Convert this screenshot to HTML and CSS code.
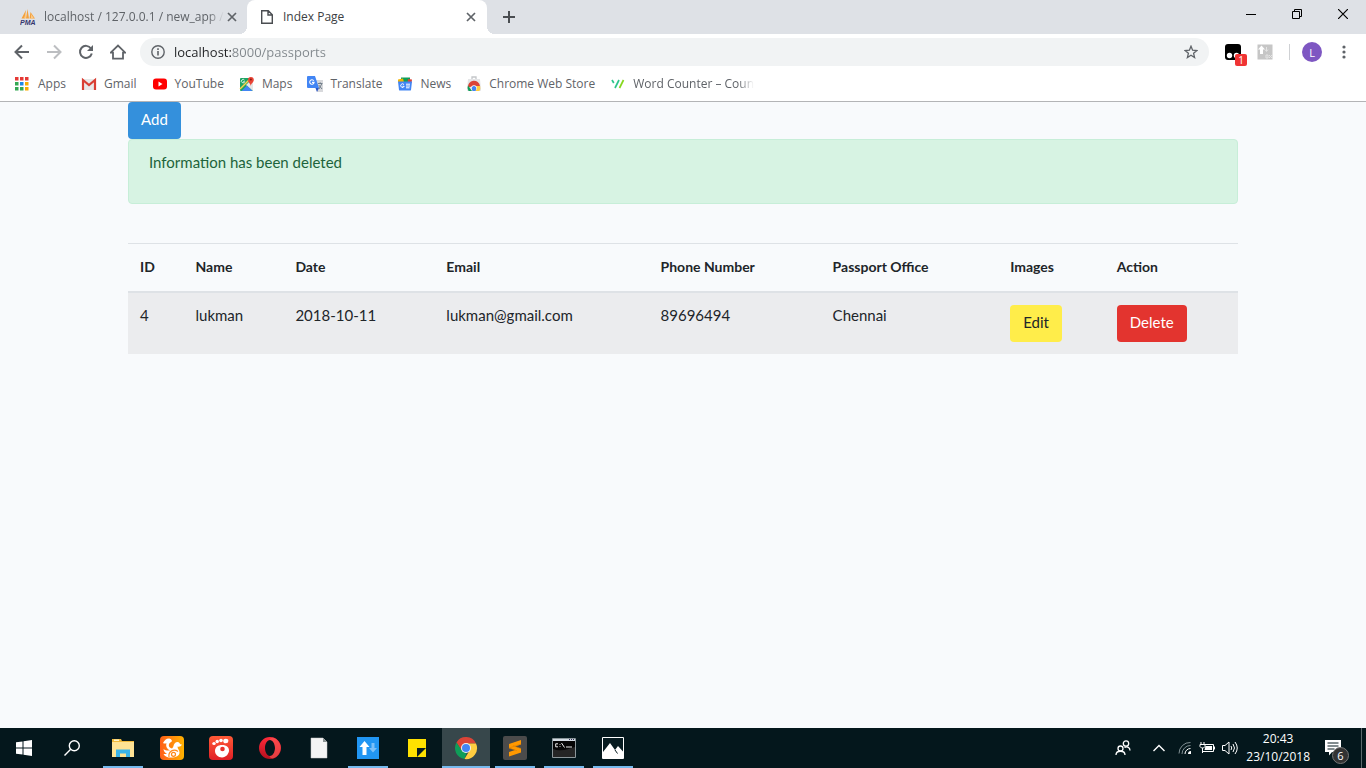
FILE: index.html
```html
<!DOCTYPE html>
<html lang="en">
<head>
<meta charset="utf-8">
<title>Index Page</title>
<link rel="stylesheet" href="styles.css">
</head>
<body>
<header class="browser">
  <div class="tabstrip">
    <div class="tab">
      <svg class="ico" width="16" height="16" viewBox="0 0 16 16"><path d="M6 1 1.500 9.500h3.500zM7.500 0 6 9.500h3zM10.500 3l-1 6.500h5.500z" fill="#f5a13a"/><path d="M6 3v6.500h-2zM11 5l3 4.500h-3z" fill="#f9c98a"/><text x="0" y="16" class="pma">PMA</text></svg>
      <span class="tab-title"><span class="fade">localhost / 127.0.0.1 / new_app /</span></span>
      <button class="tab-close" aria-label="Close tab"><svg width="10" height="10" viewBox="0 0 10 10"><path d="M1 1l8 8M9 1l-8 8" stroke="#5f6368" stroke-width="1.700"/></svg></button>
    </div>
    <div class="tab active">
      <svg class="ico" width="16" height="16" viewBox="0 0 16 16"><path d="M2.700 1.700h6.600l4 4v8.600H2.700zM9 1.700V6h4.300" fill="none" stroke="#4a4d51" stroke-width="1.400"/></svg>
      <span class="tab-title">Index Page</span>
      <button class="tab-close" aria-label="Close tab"><svg width="10" height="10" viewBox="0 0 10 10"><path d="M1 1l8 8M9 1l-8 8" stroke="#5f6368" stroke-width="1.700"/></svg></button>
    </div>
    <button class="new-tab" aria-label="New tab"><svg width="12" height="12" viewBox="0 0 12 12"><path d="M6 0v12M0 6h12" stroke="#4a4d51" stroke-width="2"/></svg></button>
    <div class="window-controls">
      <button aria-label="Minimize"><svg width="10" height="10" viewBox="0 0 10 10"><path d="M0 5.500h10" stroke="#000"/></svg></button>
      <button aria-label="Restore"><svg width="10" height="10" viewBox="0 0 10 10"><path d="M.5 2.500h7v7h-7zM2.500 2.500v-2h7v7h-2" fill="none" stroke="#000"/></svg></button>
      <button aria-label="Close"><svg width="10" height="10" viewBox="0 0 10 10"><path d="M0 0l10 10M10 0L0 10" stroke="#000" stroke-width="1.200"/></svg></button>
    </div>
  </div>

  <div class="toolbar">
    <div class="nav">
      <button aria-label="Back"><svg width="16" height="16" viewBox="0 0 16 16"><path d="M15 8H2M8 1.500L1.500 8 8 14.500" fill="none" stroke="#5f6368" stroke-width="2"/></svg></button>
      <button aria-label="Forward"><svg width="16" height="16" viewBox="0 0 16 16"><path d="M1 8h13M8 1.500L14.500 8 8 14.500" fill="none" stroke="#bcbec1" stroke-width="2"/></svg></button>
      <button aria-label="Reload"><svg width="16" height="16" viewBox="0 0 16 16"><path d="M13 4.500A6 6 0 1 0 13.800 9.500" fill="none" stroke="#5f6368" stroke-width="2"/><path d="M15 1v6H9z" fill="#5f6368"/></svg></button>
      <button aria-label="Home"><svg width="16" height="16" viewBox="0 0 16 16"><path d="M.7 8.700L8 1.500l7.300 7.200H13v6H3v-6z" fill="none" stroke="#5f6368" stroke-width="1.800"/></svg></button>
    </div>
    <div class="omnibox">
      <svg width="14" height="14" viewBox="0 0 14 14"><circle cx="7" cy="7" r="6.200" fill="none" stroke="#5f6368" stroke-width="1.400"/><path d="M7 6v4.500M7 3.300v1.700" stroke="#5f6368" stroke-width="1.600"/></svg>
      <input class="url" type="text" aria-label="Address" value="localhost:8000/passports">
      <button aria-label="Bookmark this page"><svg width="14" height="14" viewBox="0 0 14 14"><path d="M7 1.200l1.600 4 4.300.3-3.300 2.800 1 4.200L7 10.200l-3.600 2.300 1-4.200L1.100 5.500l4.300-.3z" fill="none" stroke="#5f6368" stroke-width="1.300"/></svg></button>
    </div>
    <div class="extensions">
      <button class="ext" aria-label="Tampermonkey, 1 script"><svg width="16" height="16" viewBox="0 0 16 16"><rect width="16" height="16" rx="3"/><circle cx="4.500" cy="11.500" r="2.700" fill="#fff"/><circle cx="11.500" cy="11.500" r="2.700" fill="#fff"/></svg><span class="badge">1</span></button>
      <button class="ext" aria-label="Data usage"><svg width="16" height="16" viewBox="0 0 16 16"><rect x=".5" y=".5" width="15" height="15" fill="#c6c6c6"/><path d="M4.500 1.500L8 5.500H6V10H3V5.500H1z" fill="#fff"/><path d="M9.500 3v4M8 5.500l1.500 2 1.500-2M9 11h2v3H9zM12 11l3 3M15 11l-3 3" fill="none" stroke="#e4e4e4"/></svg></button>
      <span class="divider"></span>
      <button class="avatar" aria-label="Profile">L</button>
      <button class="more" aria-label="Menu"><svg width="4" height="14" viewBox="0 0 4 14"><g fill="#5f6368"><circle cx="2" cy="2" r="1.600"/><circle cx="2" cy="7" r="1.600"/><circle cx="2" cy="12" r="1.600"/></g></svg></button>
    </div>
  </div>

  <nav class="bookmarks">
    <a href="#"><svg width="16" height="14" viewBox="0 0 16 14"><path d="M0 0h3.500v3.500H0zM5 0h3.500v3.500H5zM10 0h3.500v3.500H10z" fill="#e53935"/><path d="M0 5h3.500v3.500H0zM0 10h3.500v3.500H0zM5 10h3.500v3.500H5z" fill="#34a853"/><path d="M5 5h3.500v3.500H5z" fill="#1e88e5"/><path d="M10 5h3.500v3.500H10zM10 10h3.500v3.500H10z" fill="#f9ab00"/></svg>Apps</a>
    <a href="#"><svg width="16" height="16" viewBox="0 0 16 16"><path d="M1 3h14v11H1z" fill="#e8e8e8"/><path d="M2 14V4L8 9l6-5v10" fill="none" stroke="#d93f34" stroke-width="2.200"/></svg>Gmail</a>
    <a href="#"><svg width="16" height="16" viewBox="0 0 16 16"><rect x="1" y="2.500" width="14" height="11" rx="3" fill="#f00"/><path d="M6.500 5.500v5L10.500 8z" fill="#fff"/></svg>YouTube</a>
    <a href="#"><svg width="16" height="16" viewBox="0 0 16 16"><rect x="1" y="2" width="13" height="13" rx="1" fill="#1fa463"/><path d="M7 9l5-5 2 2v9z" fill="#e6e6e6"/><path d="M2.500 15L8 9.500l5.500 5.500z" fill="#4285f4"/><path d="M1 13L11 3" stroke="#ffd04b" stroke-width="1.500"/><path d="M11.800 10C11.500 7.500 9 6.500 9 3.800a2.900 2.900 0 0 1 5.800 0C14.800 6.500 12 7.500 11.800 10z" fill="#ea4335"/><circle cx="11.900" cy="3.600" r="1" fill="#8b1a12"/><path d="M5.500 4.200a1.700 1.700 0 1 0 .2 1.500H4.200" fill="none" stroke="#fff" stroke-width=".8"/></svg>Maps</a>
    <a href="#"><svg width="16" height="16" viewBox="0 0 16 16"><path d="M6 4h10v12H10z" fill="#d8d9dc"/><path d="M0 1a1 1 0 0 1 1-1h7l4 12H1a1 1 0 0 1-1-1z" fill="#4285f4"/><path d="M8.500 12h3.500l-2 4z" fill="#2a56c6"/><path d="M6.800 4.800a2.200 2.200 0 1 0 .3 1.600H5" fill="none" stroke="#fff" stroke-width="1.100"/><path d="M11 7.500h4.500M13.200 6.300v1.200M11.700 9l3.300 4M14.700 8l-2.700 5" fill="none" stroke="#74808c"/></svg>Translate</a>
    <a href="#"><svg width="16" height="16" viewBox="0 0 16 16"><path d="M4 1.500h9v5H4z" fill="#0f9d58"/><path d="M1 3.500l5-1 1 4H1z" fill="#f4b400"/><path d="M11 3l4 .5-.5 3.500h-4z" fill="#db4437"/><path d="M1 5.500h14L14 14a1 1 0 0 1-1 .5H3A1 1 0 0 1 2 14z" fill="#4285f4"/><path d="M7 8.600a1.800 1.800 0 1 0 .2 1.700H5.500M9 8.200h4M9 10h4M9 11.800h3.500" fill="none" stroke="#fff"/></svg>News</a>
    <a href="#"><svg width="16" height="16" viewBox="0 0 16 16"><path d="M6 3V1h4v2" fill="none" stroke="#c3c6c9" stroke-width="1.300"/><path d="M2 3h12l1 11a1 1 0 0 1-1 1H2a1 1 0 0 1-1-1z" fill="#e4e5e7"/><path d="M2 11.500A6 6 0 0 1 14 10H8z" fill="#db4437"/><path d="M2 9.500L6 15H2.500A5.500 5.500 0 0 1 2 9.500z" fill="#0f9d58"/><path d="M9.500 10h4.600a6 6 0 0 1-.8 5H9z" fill="#ffcd40"/><circle cx="8" cy="12" r="2.800" fill="#fff"/><path d="M5.800 13a2.300 2.300 0 1 1 4.400 0l-.7 2h-3z" fill="#4285f4"/></svg>Chrome Web Store</a>
    <a href="#"><svg width="16" height="16" viewBox="0 0 16 16"><path d="M2 4l1.800 3" stroke="#2bc48a" stroke-width="1.700"/><path d="M5 12l4-8" stroke="#2bc48a" stroke-width="1.700"/><path d="M9.500 12l4-8" stroke="#86d71e" stroke-width="1.700"/></svg><span class="fade">Word Counter – Coun</span></a>
  </nav>
</header>

<main class="page">
  <div class="container">
    <a class="btn primary" href="#">Add</a>
    <div class="alert" role="status"><p>Information has been deleted</p></div>
    <table class="table">
      <colgroup><col class="c-id"><col class="c-name"><col class="c-date"><col class="c-email"><col class="c-phone"><col class="c-office"><col class="c-images"><col class="c-action"></colgroup>
      <thead>
        <tr><th>ID</th><th>Name</th><th>Date</th><th>Email</th><th>Phone Number</th><th>Passport Office</th><th>Images</th><th>Action</th></tr>
      </thead>
      <tbody>
        <tr><td>4</td><td>lukman</td><td>2018-10-11</td><td>lukman@gmail.com</td><td>89696494</td><td>Chennai</td><td><a class="btn warning" href="#">Edit</a></td><td><button class="btn danger" type="button">Delete</button></td></tr>
      </tbody>
    </table>
  </div>
</main>

<footer class="taskbar">
  <div class="launch">
    <button aria-label="Start"><svg width="16" height="16" viewBox="0 0 16 16"><path d="M0 2.300L6.500 1.400v6.100H0zM7.500 1.200L16 0v7.500H7.500zM0 8.500h6.500v6.100L0 13.700zM7.500 8.500H16V16l-8.500-1.200z" fill="#fff"/></svg></button>
    <button aria-label="Search"><svg width="16" height="16" viewBox="0 0 16 16"><circle cx="10.300" cy="5.700" r="5" fill="none" stroke="#fff" stroke-width="1.400"/><path d="M6.700 9.300L.5 15.500" stroke="#fff" stroke-width="1.400"/></svg></button>
  </div>
  <div class="apps">
    <button class="open" aria-label="File Explorer"><svg width="24" height="24" viewBox="0 0 24 24"><path d="M1 3h9l1 2h12v16H1z" fill="#f0b93c"/><path d="M1 6h22v15H1z" fill="#ffe394"/><path d="M3 3.500h5v1.500H3z" fill="#fff4c9"/><path d="M5 21v-7.500h14V21h-4v-3.500H9V21z" fill="#3bb3e8"/></svg></button>
    <button aria-label="UC Browser"><svg width="24" height="24" viewBox="0 0 24 24"><defs><linearGradient id="uc" x1="0" x2="1" y2="0"><stop stop-color="#ff5e18"/><stop offset="1" stop-color="#ffb300"/></linearGradient></defs><rect width="24" height="24" rx="4" fill="url(#uc)"/><path d="M9 2.500C6 2.500 4.500 4.500 3 7c1 .7 2.300.7 3.500.3C5.500 10.500 7 13 10 14.500c-3 .3-5-.3-6.500-1.500.3 2.500 1.500 4 3.500 4.700-1.300.5-2.500.5-3.500.2C5 20.500 7.500 21.500 11 21.500c5 0 8.500-1.500 8.500-5 0-2.500-2-3.500-2-6 1.500.5 3.500 0 4.500-2-1.500 0-2-.5-2.500-1.500-1-1.500-3-1.500-4.500 0-2 2-1 4-3 5.500C9 11.500 8.500 10 9 8c.5-1.300 2-1.500 3-3C11.500 3.500 10.500 2.500 9 2.500z" fill="#fff"/><path d="M9 21c-1-6 5-8.500 9-5.500" fill="none" stroke="#ff8a1a" stroke-width="1.200"/><circle cx="13.500" cy="18.300" r="2" fill="none" stroke="#ff8a1a" stroke-width="1.200"/></svg></button>
    <button aria-label="GOM Player"><svg width="24" height="24" viewBox="0 0 24 24"><defs><linearGradient id="gom" x1="0" x2="0" y2="1"><stop stop-color="#ff5a36"/><stop offset="1" stop-color="#e01f26"/></linearGradient></defs><rect width="24" height="24" rx="4" fill="url(#gom)"/><g fill="#fff"><ellipse cx="5" cy="7.500" rx="1.700" ry="1.500"/><circle cx="8.200" cy="5.500" r="1.700"/><circle cx="12" cy="4.500" r="1.800"/><ellipse cx="16.800" cy="5" rx="2.600" ry="2.300"/><path d="M6 15c0-4 3-6 7-6 5 0 7 2.500 7 5.500s-3 7-7 7-7-3-7-6.500z"/></g><circle cx="13.500" cy="13" r="2.300" fill="#e8322c"/></svg></button>
    <button aria-label="Opera"><svg width="24" height="24" viewBox="0 0 24 24"><defs><linearGradient id="op" x1="0" x2="0" y2="1"><stop stop-color="#ff2b3a"/><stop offset="1" stop-color="#b5101e"/></linearGradient></defs><path fill-rule="evenodd" d="M12 1a11 11 0 1 0 0 22 11 11 0 0 0 0-22zM12 4c3 0 5 4 5 8s-2 8-5 8-5-4-5-8 2-8 5-8z" fill="url(#op)"/><path d="M15 1.500a11 11 0 0 1 0 21c-2 0-3-1-3.500-2.500 3 .5 5.500-3.500 5.500-8s-2.500-8.500-5.500-8c.5-1.500 1.500-2.500 3.500-2.500z" fill="#ff5b56" opacity=".6"/></svg></button>
    <button aria-label="Document"><svg width="24" height="24" viewBox="0 0 24 24"><path d="M4 2h12l4 4v16H4z" fill="#f4f4f4" stroke="#c9c9c9" stroke-width=".5"/><path d="M16 2v4h4z" fill="#8c9494"/></svg></button>
    <button class="open" aria-label="Data usage"><svg width="24" height="24" viewBox="0 0 24 24"><rect x="1" y="1" width="22" height="22" fill="#2196f3"/><path d="M8.500 5l5 6h-3v8h-4v-8h-3z" fill="#fff"/><path d="M15.500 7h3v5H21l-4 4.500-4-4.500h2.500z" fill="#7cc0f8"/></svg></button>
    <button aria-label="Sticky Notes"><svg width="24" height="24" viewBox="0 0 24 24"><path d="M3 3h18v18H3z" fill="#ffe100"/><path d="M12 12h9l-9 9z" fill="#071b20"/></svg></button>
    <button class="open current" aria-label="Google Chrome"><svg width="24" height="24" viewBox="0 0 24 24"><path d="M2.500 6.500A11 11 0 0 1 22 7.500H12l-4.600 7z" fill="#db4437"/><path d="M2.500 6.500l5.300 8 5 2.200L10.500 23A11 11 0 0 1 2.500 6.500z" fill="#0f9d58"/><path d="M12 7.500h10A11 11 0 0 1 10.500 23l5.300-9z" fill="#ffcd40"/><circle cx="12" cy="12" r="5" fill="#f1f1f1"/><circle cx="12" cy="12" r="4" fill="#4285f4"/></svg></button>
    <button class="open" aria-label="Sublime Text"><svg width="24" height="24" viewBox="0 0 24 24"><rect width="24" height="24" rx="2" fill="#4b4b4b"/><path d="M18 4v4.500l-6 2 6 2v4L6 20.500V16l6-2-6-2V8z" fill="#ff9800"/><path d="M6 12l12-4M6 12.200l8 2.500M10 9.500l8 3" stroke="#d77c00" stroke-width=".5"/></svg></button>
    <button class="open" aria-label="Command Prompt"><svg width="24" height="20" viewBox="0 0 24 20"><path d="M.5.500h23v19H.5z" fill="#050505" stroke="#8b969a"/><path d="M1 1h22v2H1z" fill="#d5dce3"/><path d="M17 1.500h1M19 1.500h1M21 1.500h1" stroke="#335"/><path d="M1 11c8 3 15 0 22-2v10H1z" fill="#252525"/><path d="M6 5.800H3.700v3H6M8 6v.8M8 8v.8M9.500 5l3 4.500M14 9h6" fill="none" stroke="#e9e9e9"/></svg></button>
    <button class="open" aria-label="Photos"><svg width="22" height="22" viewBox="0 0 22 22"><path d="M.5.500h21v21H.5z" fill="#071b20" stroke="#fff"/><path d="M1 15l7-9 5 7 3-4L21 14.500V21H1z" fill="#fff"/><path d="M13 13l2.500 3.500" stroke="#071b20"/></svg></button>
  </div>
  <div class="tray">
    <button aria-label="People"><svg width="16" height="16" viewBox="0 0 16 16"><g fill="none" stroke="#fff" stroke-width="1.300"><circle cx="5.500" cy="8.500" r="2.500"/><path d="M1 15c0-5 9-5 9 0"/><circle cx="11" cy="3.500" r="2.700"/><path d="M9.500 7.500c3-1.500 5.500 0 5.500 3"/></g></svg></button>
    <button aria-label="Hidden icons"><svg width="12" height="8" viewBox="0 0 12 8"><path d="M.5 7L6 1.500 11.500 7" fill="none" stroke="#fff" stroke-width="1.400"/></svg></button>
    <button aria-label="Network"><svg width="14" height="14" viewBox="0 0 14 14"><g fill="none" stroke="#829094"><path d="M1 12.500A11 11 0 0 1 12.500 1.500M4 13a8.500 8.500 0 0 1 8.500-8.500"/><path d="M7 13a5.500 5.500 0 0 1 5.500-5.500" stroke="#fff"/></g><path d="M10 13a3 3 0 0 1 3-3v3z" fill="#fff"/></svg></button>
    <button aria-label="Battery"><svg width="16" height="12" viewBox="0 0 16 12"><path d="M2 0v2M5 0v2M1 2.500h5v2L4.500 6h-2L1 4.500zM3.500 6v5" fill="none" stroke="#fff"/><path d="M6 2.500h8.500v7H3.500M15.500 4.500v3" fill="none" stroke="#fff"/><path d="M6.500 4H13v4H5.500z" fill="#fff"/></svg></button>
    <button aria-label="Volume"><svg width="17" height="14" viewBox="0 0 17 14"><g fill="none" stroke="#fff"><path d="M.5 4.500H3L7 1v12L3 9.500H.5z"/><path d="M9 5q1.500 2 0 4M11 3q3 4 0 8M13 1q4.500 6 0 12"/></g></svg></button>
    <div class="clock"><span>20:43</span><span>23/10/2018</span></div>
    <button class="notify" aria-label="Notifications"><svg width="16" height="16" viewBox="0 0 16 16"><path d="M0 0h16v12H7l-3 3.500V12H0z" fill="#fff"/><path d="M2.500 3h11M2.500 6h11M2.500 9h7" stroke="#071b20"/></svg><span class="count">6</span></button>
  </div>
  <button class="show-desktop" aria-label="Show desktop"></button>
</footer>
</body>
</html>
```

FILE: styles.css
```css
* { box-sizing: border-box; }
body {
  margin: 0;
  min-height: 100vh;
  display: flex;
  flex-direction: column;
  background: #f8fafc;
  font-family: "Open Sans", "Noto Sans", sans-serif;
  font-size: 12px;
}
button {
  display: flex;
  align-items: center;
  justify-content: center;
  padding: 0;
  border: 0;
  background: none;
  font: inherit;
  color: inherit;
}
a { color: inherit; text-decoration: none; }
svg { display: block; flex: none; }
.fade { display: inline-block; mask-image: linear-gradient(90deg, #000 calc(100% - 16px), transparent); }

/* Browser window */
.browser { background: #fff; border-bottom: 1px solid #b3b4b6; color: #5f6368; }
.tabstrip { display: flex; height: 34px; background: #dee1e6; }
.tab {
  display: flex;
  align-items: center;
  gap: 8px;
  width: 240px;
  padding: 0 10px 0 12px;
}
.tab:first-child { width: 247px; padding-left: 20px; padding-right: 9px; }
.tab:first-child .tab-close { margin-left: -8px; }
.tab.active {
  position: relative;
  background: #fff;
  border-radius: 8px 8px 0 0;
  color: #3c4043;
}
.tab.active::before, .tab.active::after {
  content: "";
  position: absolute;
  bottom: 0;
  width: 8px;
  height: 8px;
}
.tab.active::before { right: 100%; background: radial-gradient(circle at 0 0, transparent 8px, #fff 8px); }
.tab.active::after { left: 100%; background: radial-gradient(circle at 100% 0, transparent 8px, #fff 8px); }
.tab-title { flex: 1; white-space: nowrap; line-height: 20px; }
.pma { font: italic bold 7px "Liberation Sans", sans-serif; fill: #35356e; }
.tab-close { width: 12px; height: 16px; }
.new-tab { width: 44px; }
.window-controls { display: flex; margin-left: auto; padding-bottom: 6px; }
.window-controls button { width: 46px; }

.toolbar { display: flex; align-items: center; height: 36px; padding: 0 18px 0 14px; }
.nav { display: flex; gap: 16px; margin-right: 14px; }
.omnibox {
  display: flex;
  flex: 1;
  align-items: center;
  gap: 9px;
  height: 28px;
  padding: 0 11px;
  border-radius: 14px;
  background: #f1f3f4;
}
.url {
  flex: 1;
  min-width: 0;
  padding: 0;
  border: 0;
  outline: 0;
  font: 13px/20px "Open Sans", "Noto Sans", sans-serif;
  color: transparent;
  background: linear-gradient(90deg, #202124 58px, #80868b 58px);
  background-clip: text;
  -webkit-background-clip: text;
}
.extensions { display: flex; align-items: center; margin-left: 16px; }
.ext { position: relative; margin-right: 16px; }
.badge {
  position: absolute;
  left: 10px;
  top: 10px;
  width: 12px;
  height: 12px;
  border-radius: 2px;
  background: #f03434;
  color: #fff;
  font-size: 10px;
  line-height: 12px;
}
.divider { width: 1px; height: 16px; margin-right: 12px; background: #cfd1d4; }
.avatar { width: 20px; height: 20px; margin-right: 18px; border-radius: 50%; background: #7e57c2; color: #fff; font-size: 11px; }
.more { width: 8px; }

.bookmarks { display: flex; gap: 15px; height: 31px; padding: 0 15px 4px; align-items: center; line-height: 20px; white-space: nowrap; }
.bookmarks a { display: flex; align-items: center; gap: 7px; }

/* Passport list */
.page { flex: 1; font: 15px/20px Lato, "Noto Sans", sans-serif; color: #212529; }
.container { max-width: 1140px; margin: 0 auto; padding: 0 15px; }
.btn { display: inline-block; vertical-align: top; padding: 6px 13px 8px; border-radius: 4px; font-size: 15px; line-height: 23px; }
.primary { background: #3490dc; color: #fff; }
.warning { background: #ffed4a; }
.danger { background: #e3342f; color: #fff; }
.alert { margin-bottom: 39px; padding: 12px 20px; border: 1px solid #c7eed8; border-radius: 4px; background: #d7f3e3; color: #1d643b; }
.alert p { margin: 0 0 19px; }
.table { width: 100%; table-layout: fixed; border-collapse: collapse; }
.table th, .table td { padding: 12px; border-top: 1px solid #dee2e6; text-align: left; vertical-align: top; }
.table th { padding-bottom: 13px; font-size: 14px; line-height: 22px; font-weight: 700; }
.table thead th { border-bottom: 2px solid #dee2e6; }
.table tbody tr { background: #ebecee; }
.c-id { width: 5%; }
.c-name { width: 9%; }
.c-date { width: 13.6%; }
.c-email { width: 19.3%; }
.c-phone { width: 15.5%; }
.c-office { width: 16%; }
.c-images { width: 9.6%; }

/* Desktop taskbar */
.taskbar { display: flex; height: 40px; background: #04171c; color: #fff; }
.launch { display: flex; margin-right: 3px; }
.launch button { width: 48px; }
.apps { display: flex; gap: 1px; }
.apps button { position: relative; width: 48px; }
.apps .open::after { content: ""; position: absolute; left: 4px; right: 4px; bottom: 0; height: 2px; background: #76b9ed; }
.apps .current { background: #37474b; }
.apps .current::after { left: 0; right: 0; }
.tray { display: flex; align-items: center; gap: 7px; margin-left: auto; padding-right: 20px; }
.tray button:first-child { margin-right: 15px; }
.tray button:nth-child(2) { margin-right: 6px; }
.clock { display: flex; flex-direction: column; align-items: center; line-height: 18px; }
.notify { position: relative; margin-left: 8px; }
.count {
  position: absolute;
  left: 7px;
  top: 7px;
  width: 17px;
  height: 17px;
  border: 1px solid #777;
  border-radius: 50%;
  background: #333;
  font-size: 11px;
  line-height: 15px;
}
.show-desktop { width: 5px; border-left: 1px solid #5b696c; }
```
